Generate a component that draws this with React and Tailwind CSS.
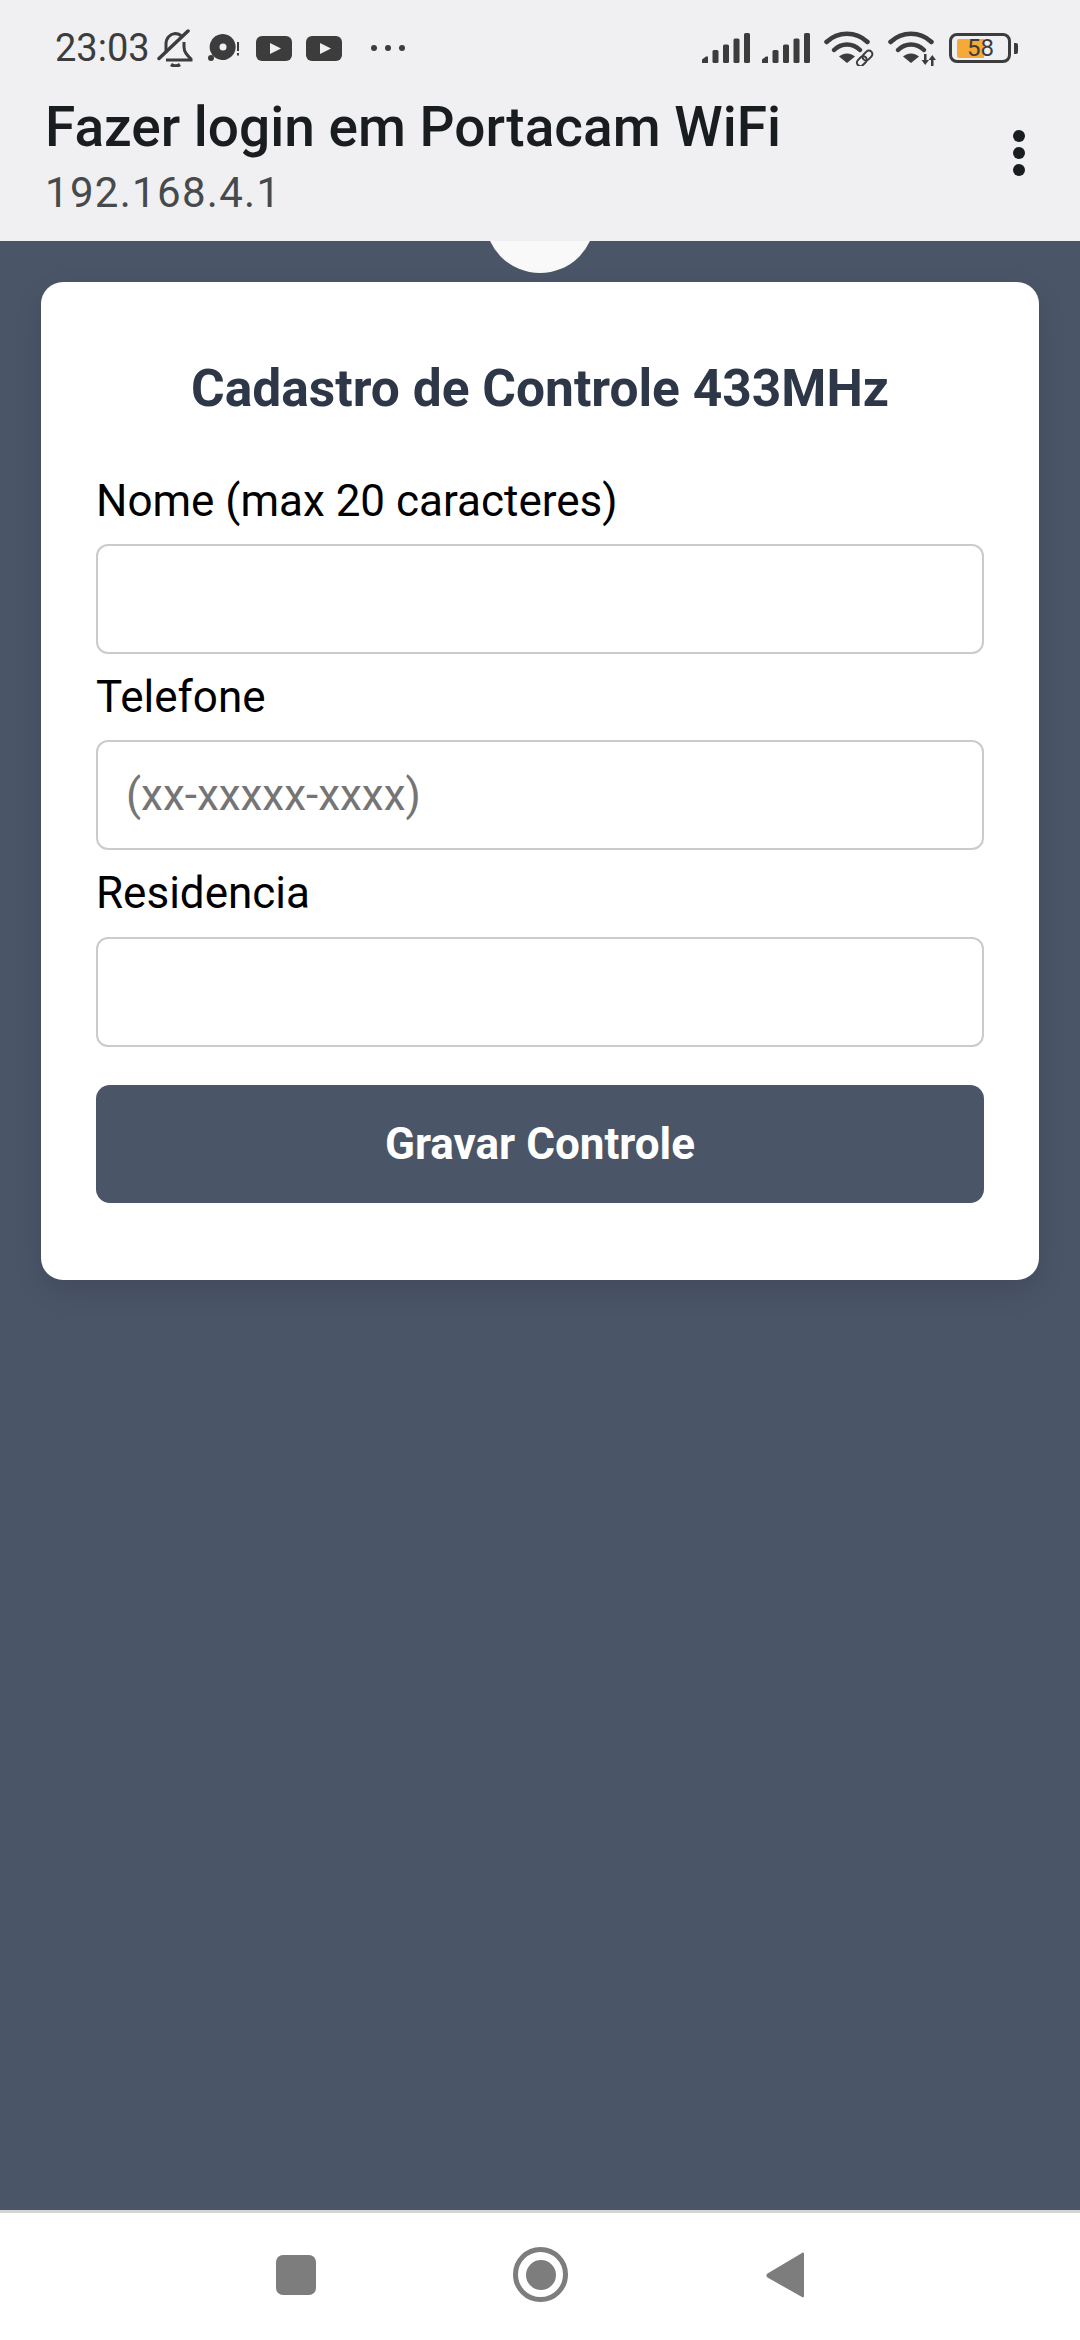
const Signal = () => (
  <svg width="48" height="30" viewBox="0 0 48 30" fill="#3c3c3c">
    <path d="M0 30v-3.500l4-3h2v6.500z" />
    <rect x="10.500" y="17" width="6" height="13" rx="1.500" />
    <rect x="21" y="11.500" width="6" height="18.500" rx="1.500" />
    <rect x="31.500" y="5.500" width="6" height="24.500" rx="1.500" />
    <rect x="42" y="0" width="6" height="30" rx="1.500" />
  </svg>
);

const WifiArcs = () => (
  <g>
    <path d="M2.500 12C14 1 32 1 43.500 12" fill="none" stroke="#3c3c3c" strokeWidth="4.500" strokeLinecap="round" />
    <path d="M10 20C17.500 12.500 28.500 12.500 36 20" fill="none" stroke="#3c3c3c" strokeWidth="4.500" strokeLinecap="round" />
    <path d="M15 26.500C20 22.500 26 22.500 31 26.500L23 33z" fill="#3c3c3c" />
  </g>
);

const YouTube = () => (
  <svg width="36" height="25" viewBox="0 0 36 25">
    <rect width="36" height="25" rx="6" fill="#3c3c3c" />
    <path d="M14 7l11 5.500-11 5.500z" fill="#f0f0f2" />
  </svg>
);

const Field = ({ label, placeholder }) => (
  <div className="flex flex-col">
    <label className="h-[86.250px] pt-[17px] text-[44px] leading-[52px] text-black">{label}</label>
    <input
      type="text"
      placeholder={placeholder}
      className="h-[110px] w-full rounded-[12px] border-[2px] border-[#cbcbcb] bg-white px-[28px] text-[44px] text-black placeholder:text-[#757575]"
    />
  </div>
);

export default function App() {
  return (
    <div className="flex h-[2340px] w-[1080px] flex-col overflow-hidden bg-[#4a5568] font-['Roboto',sans-serif]">
      <header className="z-10 flex h-[241px] flex-col bg-[#f0f0f2]">
        <div className="flex h-[94px] items-center pl-[55px] pt-[2px] text-[#3c3c3c]">
          <span className="w-[93px] text-[38px] leading-none">23:03</span>
          <svg className="ml-[9px]" width="36" height="38" viewBox="0 0 36 38" fill="none" stroke="#3c3c3c" strokeWidth="3">
            <path d="M2 29.500L31 2" strokeWidth="3.500" strokeLinecap="round" />
            <path d="M9 22V15C9 9 13 5 18 4.500C20.500 4.500 23 5.500 25 7.500M27 13V18C27 23 30 26 34 30V31H9" />
            <path d="M14 35.500C17 37.500 20 37.500 23 35.500" strokeWidth="3.500" />
          </svg>
          <svg className="ml-[15px]" width="32" height="28" viewBox="0 0 32 28">
            <path d="M15 0a13 13 0 1 1-8 23.500A13 13 0 0 1 15 0z" fill="#3c3c3c" />
            <circle cx="15" cy="13" r="3.500" fill="#f0f0f2" />
            <circle cx="3" cy="24" r="3" fill="#3c3c3c" />
            <rect x="29" y="8" width="2" height="9" fill="#3c3c3c" />
            <rect x="29" y="19" width="2" height="2.500" fill="#3c3c3c" />
          </svg>
          <span className="ml-[16px] flex"><YouTube /></span>
          <span className="ml-[14px] flex"><YouTube /></span>
          <span className="ml-[29px] flex gap-[8px]">
            <i className="h-[6px] w-[6px] rounded-full bg-[#3c3c3c]" />
            <i className="h-[6px] w-[6px] rounded-full bg-[#3c3c3c]" />
            <i className="h-[6px] w-[6px] rounded-full bg-[#3c3c3c]" />
          </span>
          <span className="ml-[297px] flex"><Signal /></span>
          <span className="ml-[12px] flex"><Signal /></span>
          <svg className="ml-[14px]" width="52" height="36" viewBox="0 0 52 36">
            <WifiArcs />
            <g fill="none" stroke="#3c3c3c" strokeWidth="2" transform="rotate(-45 41 28)">
              <rect x="31" y="24.500" width="11" height="7" rx="3.500" />
              <rect x="39" y="24.500" width="11" height="7" rx="3.500" />
            </g>
          </svg>
          <svg className="ml-[12px]" width="50" height="36" viewBox="0 0 50 36" fill="#3c3c3c">
            <WifiArcs />
            <path d="M36 24h2.500v6h2.500l-3.800 5-3.700-5h2.500zM43 36h2.500v-6H48l-3.700-5-3.800 5H43z" />
          </svg>
          <span className="relative ml-[11px] flex h-[30px] w-[62px] items-center rounded-[8px] border-[3px] border-[#3c3c3c]">
            <span className="ml-[5px] h-[19px] w-[27px] rounded-l-[2px] bg-[#f5a936]" />
            <span className="absolute left-[15px] top-[1px] text-[24px] leading-[22px] text-[#3c3c3c]">58</span>
          </span>
          <span className="ml-[3px] h-[11px] w-[4px] rounded-r-[2px] bg-[#3c3c3c]" />
        </div>
        <div className="flex items-center justify-between pl-[45px] pr-[55px]">
          <div className="flex flex-col">
            <span className="h-[66px] text-[55px] font-medium leading-[66px] text-[#1a1d1f]">Fazer login em Portacam WiFi</span>
            <span className="h-[64px] pt-[1px] text-[42px] leading-[64px] tracking-[1.300px] text-[#464a4d]">192.168.4.1</span>
          </div>
          <div className="mb-[12px] flex flex-col gap-[5px]">
            <i className="h-[12px] w-[12px] rounded-full bg-[#1a1d1f]" />
            <i className="h-[12px] w-[12px] rounded-full bg-[#1a1d1f]" />
            <i className="h-[12px] w-[12px] rounded-full bg-[#1a1d1f]" />
          </div>
        </div>
      </header>

      <main className="relative flex-1 overflow-hidden px-[41px] pt-[41px]">
        <div className="absolute left-[485px] top-[-78px] h-[110px] w-[110px] rounded-full bg-[#f9f9f9]" />
        <div className="relative rounded-[22px] bg-white px-[55px] pb-[77px] pt-[74px] shadow-[0_11px_28px_rgba(0,0,0,0.12)]">
          <h2 className="text-center text-[51.500px] font-bold leading-[66px] text-[#2d3748]">Cadastro de Controle 433MHz</h2>
          <div className="mt-[35.750px] flex flex-col">
            <Field label="Nome (max 20 caracteres)" />
            <Field label="Telefone" placeholder="(xx-xxxxx-xxxx)" />
            <Field label="Residencia" />
          </div>
          <button className="mt-[38.500px] h-[118px] w-full rounded-[14px] bg-[#4a5568] text-[44px] font-bold text-white">Gravar Controle</button>
        </div>
      </main>

      <nav className="flex h-[130px] items-center border-t-[3px] border-[#d4d4d4] bg-white pb-[4px] pl-[276px]">
        <span className="h-[40px] w-[40px] rounded-[7px] bg-[#7d7d7d]" />
        <span className="ml-[197px] flex h-[55px] w-[55px] items-center justify-center rounded-full border-[5px] border-[#7d7d7d]">
          <span className="h-[30px] w-[30px] rounded-full bg-[#7d7d7d]" />
        </span>
        <svg className="ml-[198px]" width="38" height="46" viewBox="0 0 38 46">
          <path d="M36 1C37 0 38 1 38 2V44C38 45 37 46 36 45L1.500 25.500C0 24.500 0 22.500 1.500 21.500z" fill="#7d7d7d" />
        </svg>
      </nav>
    </div>
  );
}
